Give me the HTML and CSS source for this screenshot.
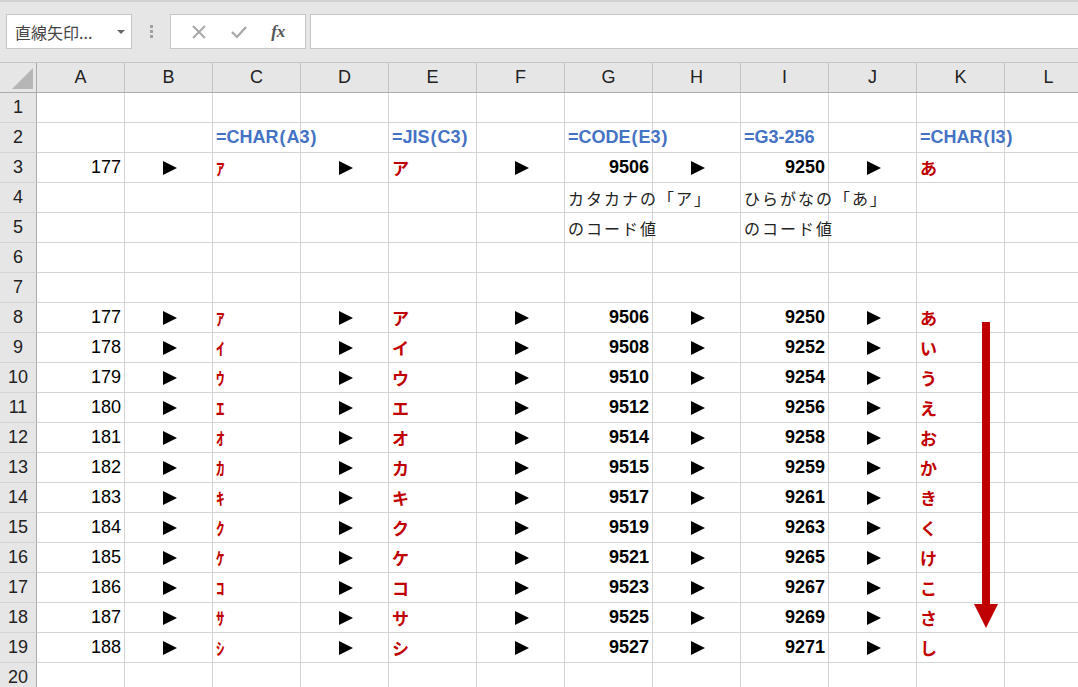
FILE: index.html
```html
<!DOCTYPE html>
<html lang="ja">
<head>
    <meta charset="UTF-8">
    <title>CHAR / JIS / CODE</title>
    <link rel="stylesheet" href="styles.css">
</head>
<body>
    <!-- Formula bar -->
    <div class="toolbar">
        <div class="namebox"><span>直線矢印...</span><span class="caret"></span></div>
        <div class="grip"><i></i><i></i><i></i></div>
        <div class="fbuttons">
            <svg width="16" height="16" viewBox="0 0 16 16"><path d="M2 2L14 14M14 2L2 14" stroke="#a6a6a6" stroke-width="1.8"/></svg>
            <svg width="18" height="16" viewBox="0 0 18 16"><path d="M2 8L7 13L16 3" stroke="#a6a6a6" stroke-width="2.2" fill="none"/></svg>
            <span class="fx">fx</span>
        </div>
        <div class="formula"></div>
    </div>

    <!-- Sheet -->
    <div class="sheet">
        <div class="row head">
            <div class="rh corner"></div>
            <div class="ch">A</div><div class="ch">B</div><div class="ch">C</div><div class="ch">D</div>
            <div class="ch">E</div><div class="ch">F</div><div class="ch">G</div><div class="ch">H</div>
            <div class="ch">I</div><div class="ch">J</div><div class="ch">K</div><div class="ch">L</div>
        </div>
        <div class="row">
            <div class="rh">1</div>
            <div class="c"></div><div class="c"></div><div class="c"></div><div class="c"></div><div class="c"></div><div class="c"></div>
            <div class="c"></div><div class="c"></div><div class="c"></div><div class="c"></div><div class="c"></div><div class="c"></div>
        </div>
        <div class="row">
            <div class="rh">2</div>
            <div class="c"></div><div class="c"></div>
            <div class="c f">=CHAR<span class="p">(</span>A3<span class="p">)</span></div><div class="c"></div>
            <div class="c f">=JIS<span class="p">(</span>C3<span class="p">)</span></div><div class="c"></div>
            <div class="c f">=CODE<span class="p">(</span>E3<span class="p">)</span></div><div class="c"></div>
            <div class="c f">=G3-256</div><div class="c"></div>
            <div class="c f">=CHAR<span class="p">(</span>I3<span class="p">)</span></div><div class="c"></div>
        </div>
        <div class="row">
            <div class="rh">3</div>
            <div class="c num">177</div><div class="c tri"><b></b></div>
            <div class="c kana">ｱ</div><div class="c tri"><b></b></div>
            <div class="c kana">ア</div><div class="c tri"><b></b></div>
            <div class="c code">9506</div><div class="c tri"><b></b></div>
            <div class="c code">9250</div><div class="c tri"><b></b></div>
            <div class="c kana">あ</div><div class="c"></div>
        </div>
        <div class="row">
            <div class="rh">4</div>
            <div class="c"></div><div class="c"></div><div class="c"></div><div class="c"></div><div class="c"></div><div class="c"></div>
            <div class="c note">カタカナの「ア」</div><div class="c"></div>
            <div class="c note">ひらがなの「あ」</div><div class="c"></div>
            <div class="c"></div><div class="c"></div>
        </div>
        <div class="row">
            <div class="rh">5</div>
            <div class="c"></div><div class="c"></div><div class="c"></div><div class="c"></div><div class="c"></div><div class="c"></div>
            <div class="c note">のコード値</div><div class="c"></div>
            <div class="c note">のコード値</div><div class="c"></div>
            <div class="c"></div><div class="c"></div>
        </div>
        <div class="row">
            <div class="rh">6</div>
            <div class="c"></div><div class="c"></div><div class="c"></div><div class="c"></div><div class="c"></div><div class="c"></div>
            <div class="c"></div><div class="c"></div><div class="c"></div><div class="c"></div><div class="c"></div><div class="c"></div>
        </div>
        <div class="row">
            <div class="rh">7</div>
            <div class="c"></div><div class="c"></div><div class="c"></div><div class="c"></div><div class="c"></div><div class="c"></div>
            <div class="c"></div><div class="c"></div><div class="c"></div><div class="c"></div><div class="c"></div><div class="c"></div>
        </div>
        <div class="row">
            <div class="rh">8</div>
            <div class="c num">177</div><div class="c tri"><b></b></div><div class="c kana">ｱ</div><div class="c tri"><b></b></div>
            <div class="c kana">ア</div><div class="c tri"><b></b></div><div class="c code">9506</div><div class="c tri"><b></b></div>
            <div class="c code">9250</div><div class="c tri"><b></b></div><div class="c kana">あ</div><div class="c"></div>
        </div>
        <div class="row">
            <div class="rh">9</div>
            <div class="c num">178</div><div class="c tri"><b></b></div><div class="c kana">ｲ</div><div class="c tri"><b></b></div>
            <div class="c kana">イ</div><div class="c tri"><b></b></div><div class="c code">9508</div><div class="c tri"><b></b></div>
            <div class="c code">9252</div><div class="c tri"><b></b></div><div class="c kana">い</div><div class="c"></div>
        </div>
        <div class="row">
            <div class="rh">10</div>
            <div class="c num">179</div><div class="c tri"><b></b></div><div class="c kana">ｳ</div><div class="c tri"><b></b></div>
            <div class="c kana">ウ</div><div class="c tri"><b></b></div><div class="c code">9510</div><div class="c tri"><b></b></div>
            <div class="c code">9254</div><div class="c tri"><b></b></div><div class="c kana">う</div><div class="c"></div>
        </div>
        <div class="row">
            <div class="rh">11</div>
            <div class="c num">180</div><div class="c tri"><b></b></div><div class="c kana">ｴ</div><div class="c tri"><b></b></div>
            <div class="c kana">エ</div><div class="c tri"><b></b></div><div class="c code">9512</div><div class="c tri"><b></b></div>
            <div class="c code">9256</div><div class="c tri"><b></b></div><div class="c kana">え</div><div class="c"></div>
        </div>
        <div class="row">
            <div class="rh">12</div>
            <div class="c num">181</div><div class="c tri"><b></b></div><div class="c kana">ｵ</div><div class="c tri"><b></b></div>
            <div class="c kana">オ</div><div class="c tri"><b></b></div><div class="c code">9514</div><div class="c tri"><b></b></div>
            <div class="c code">9258</div><div class="c tri"><b></b></div><div class="c kana">お</div><div class="c"></div>
        </div>
        <div class="row">
            <div class="rh">13</div>
            <div class="c num">182</div><div class="c tri"><b></b></div><div class="c kana">ｶ</div><div class="c tri"><b></b></div>
            <div class="c kana">カ</div><div class="c tri"><b></b></div><div class="c code">9515</div><div class="c tri"><b></b></div>
            <div class="c code">9259</div><div class="c tri"><b></b></div><div class="c kana">か</div><div class="c"></div>
        </div>
        <div class="row">
            <div class="rh">14</div>
            <div class="c num">183</div><div class="c tri"><b></b></div><div class="c kana">ｷ</div><div class="c tri"><b></b></div>
            <div class="c kana">キ</div><div class="c tri"><b></b></div><div class="c code">9517</div><div class="c tri"><b></b></div>
            <div class="c code">9261</div><div class="c tri"><b></b></div><div class="c kana">き</div><div class="c"></div>
        </div>
        <div class="row">
            <div class="rh">15</div>
            <div class="c num">184</div><div class="c tri"><b></b></div><div class="c kana">ｸ</div><div class="c tri"><b></b></div>
            <div class="c kana">ク</div><div class="c tri"><b></b></div><div class="c code">9519</div><div class="c tri"><b></b></div>
            <div class="c code">9263</div><div class="c tri"><b></b></div><div class="c kana">く</div><div class="c"></div>
        </div>
        <div class="row">
            <div class="rh">16</div>
            <div class="c num">185</div><div class="c tri"><b></b></div><div class="c kana">ｹ</div><div class="c tri"><b></b></div>
            <div class="c kana">ケ</div><div class="c tri"><b></b></div><div class="c code">9521</div><div class="c tri"><b></b></div>
            <div class="c code">9265</div><div class="c tri"><b></b></div><div class="c kana">け</div><div class="c"></div>
        </div>
        <div class="row">
            <div class="rh">17</div>
            <div class="c num">186</div><div class="c tri"><b></b></div><div class="c kana">ｺ</div><div class="c tri"><b></b></div>
            <div class="c kana">コ</div><div class="c tri"><b></b></div><div class="c code">9523</div><div class="c tri"><b></b></div>
            <div class="c code">9267</div><div class="c tri"><b></b></div><div class="c kana">こ</div><div class="c"></div>
        </div>
        <div class="row">
            <div class="rh">18</div>
            <div class="c num">187</div><div class="c tri"><b></b></div><div class="c kana">ｻ</div><div class="c tri"><b></b></div>
            <div class="c kana">サ</div><div class="c tri"><b></b></div><div class="c code">9525</div><div class="c tri"><b></b></div>
            <div class="c code">9269</div><div class="c tri"><b></b></div><div class="c kana">さ</div><div class="c"></div>
        </div>
        <div class="row">
            <div class="rh">19</div>
            <div class="c num">188</div><div class="c tri"><b></b></div><div class="c kana">ｼ</div><div class="c tri"><b></b></div>
            <div class="c kana">シ</div><div class="c tri"><b></b></div><div class="c code">9527</div><div class="c tri"><b></b></div>
            <div class="c code">9271</div><div class="c tri"><b></b></div><div class="c kana">し</div><div class="c"></div>
        </div>
        <div class="row">
            <div class="rh">20</div>
            <div class="c"></div><div class="c"></div><div class="c"></div><div class="c"></div><div class="c"></div><div class="c"></div>
            <div class="c"></div><div class="c"></div><div class="c"></div><div class="c"></div><div class="c"></div><div class="c"></div>
        </div>

        <!-- Red arrow shape drawn over the sheet -->
        <svg class="arrow" width="26" height="308" viewBox="0 0 26 308">
            <rect x="9" y="0" width="8" height="284" fill="#c00000"/>
            <polygon points="1,282 25,282 13,306" fill="#c00000"/>
        </svg>
    </div>
</body>
</html>
```

FILE: styles.css
```css
/* Page */
body {
    margin: 0;
    width: 1078px;
    height: 687px;
    overflow: hidden;
    background: #fff;
    font-family: "Liberation Sans", "Noto Sans CJK JP", sans-serif;
    color: #000;
}

/* Formula bar */
.toolbar {
    height: 63px;
    background: #e6e6e6;
    border-top: 2px solid #d2d2d2;
    border-bottom: 1px solid #c6c6c6;
    box-sizing: border-box;
    display: flex;
    align-items: flex-start;
    padding-top: 12px;
    padding-left: 6px;
}

.namebox {
    width: 126px;
    height: 35px;
    box-sizing: border-box;
    background: #fff;
    border: 1px solid #c6c6c6;
    display: flex;
    align-items: center;
    justify-content: space-between;
    padding: 0 6px 0 8px;
    font-family: "Noto Sans CJK JP", sans-serif;
    font-size: 16px;
    color: #444;
}

.caret {
    width: 0;
    height: 0;
    border-left: 4px solid transparent;
    border-right: 4px solid transparent;
    border-top: 4px solid #666;
}

.grip {
    width: 38px;
    height: 35px;
    display: flex;
    flex-direction: column;
    align-items: center;
    justify-content: center;
    gap: 2px;
}

.grip i {
    width: 3px;
    height: 3px;
    background: #a0a0a0;
}

.fbuttons {
    width: 136px;
    height: 35px;
    box-sizing: border-box;
    background: #fff;
    border: 1px solid #c6c6c6;
    display: flex;
    align-items: center;
    justify-content: space-around;
    padding: 0 8px;
}

.fx {
    font-family: "Liberation Serif", serif;
    font-style: italic;
    font-weight: bold;
    font-size: 17px;
    color: #555;
}

.formula {
    flex: 1;
    height: 35px;
    margin-left: 4px;
    background: #fff;
    border: 1px solid #c6c6c6;
    border-right: none;
    box-sizing: border-box;
}

/* Sheet grid */
.sheet {
    position: relative;
}

.row {
    display: flex;
    height: 30px;
}

.rh,
.ch,
.c {
    flex: none;
    box-sizing: border-box;
    height: 30px;
    display: flex;
    align-items: center;
    font-size: 18px;
    white-space: nowrap;
}

.rh {
    width: 37px;
    justify-content: center;
    background: #e6e6e6;
    border-right: 1px solid #ababab;
    border-bottom: 1px solid #d4d4d4;
    color: #222;
}

.ch {
    width: 88px;
    justify-content: center;
    background: #e6e6e6;
    border-right: 1px solid #c4c4c4;
    border-bottom: 1px solid #ababab;
    color: #222;
}

.head .rh {
    border-bottom: 1px solid #ababab;
}

.corner {
    position: relative;
}

.corner::after {
    content: "";
    position: absolute;
    right: 3px;
    bottom: 3px;
    border-left: 21px solid transparent;
    border-bottom: 21px solid #b6b6b6;
}

.c {
    width: 88px;
    border-right: 1px solid #d4d4d4;
    border-bottom: 1px solid #d4d4d4;
    padding: 0 3px;
    position: relative;
}

/* Cell kinds */
.num {
    justify-content: flex-end;
}

.code {
    justify-content: flex-end;
    font-weight: bold;
}

.f {
    color: #4472c4;
    font-weight: bold;
    z-index: 1;
}

.f .p {
    margin: 0 1px;
}

.kana {
    color: #c00000;
    font-weight: bold;
    font-family: "Noto Sans CJK JP", sans-serif;
    font-size: 17px;
}

.note {
    font-family: "Noto Sans CJK JP", sans-serif;
    font-size: 16px;
    letter-spacing: 2px;
    color: #222;
    z-index: 1;
}

.tri {
    justify-content: center;
}

.tri b {
    width: 0;
    height: 0;
    border-left: 14px solid #000;
    border-top: 7px solid transparent;
    border-bottom: 7px solid transparent;
    margin-left: 2px;
}

.arrow {
    position: absolute;
    left: 973px;
    top: 259px;
}
```
